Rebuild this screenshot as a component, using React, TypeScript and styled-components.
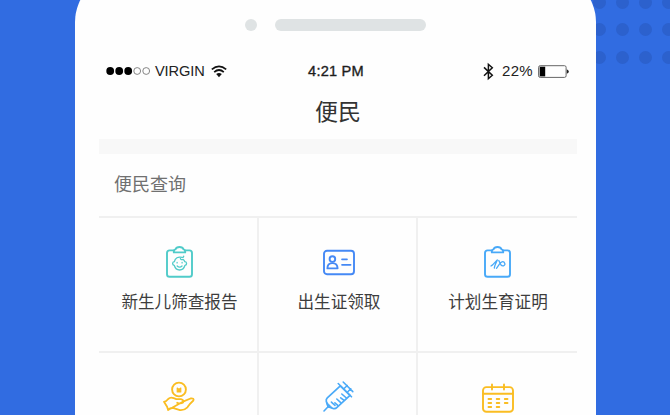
import React from "react";
import styled, { createGlobalStyle } from "styled-components";

const GlobalStyle = createGlobalStyle`
  * { box-sizing: border-box; }
  body { margin: 0; overflow: hidden; background: #316ce1; }
`;

const Page = styled.main`
  position: relative;
  width: 670px;
  height: 415px;
  overflow: hidden;
  background: #316ce1;
  font-family: "Liberation Sans", "Noto Sans CJK SC", sans-serif;
`;

const DotField = styled.div`
  position: absolute;
  top: -4px;
  left: 593px;
  display: grid;
  grid-template-columns: repeat(4, 13px);
  gap: 14.4px 10px;
`;

const BackdropDot = styled.i`
  width: 13px;
  height: 13px;
  border-radius: 50%;
  background: #2c61cd;
`;

const Phone = styled.section`
  position: relative;
  width: 520.5px;
  height: 520px;
  margin: -26px 0 0 75.3px;
  padding: 45px 18.8px 0 23.7px;
  border-radius: 48px;
  background: #fefefe;
`;

const Earpiece = styled.div`
  display: flex;
  gap: 18.5px;
  margin-left: 145.6px;
  height: 12px;
`;

const Camera = styled.i`
  width: 12px;
  height: 12px;
  border-radius: 50%;
  background: #dfe3e4;
`;

const Speaker = styled.i`
  width: 151px;
  height: 11.5px;
  border-radius: 6px;
  background: #dfe3e4;
`;

const StatusBar = styled.header`
  display: grid;
  grid-template-columns: 1fr auto 1fr;
  align-items: center;
  height: 20px;
  margin-top: 30px;
  padding: 0 8px 0 7px;
  color: #222;
  font-size: 14.6px;
  line-height: 20px;
`;

const StatusGroup = styled.div<{ $end?: boolean }>`
  display: flex;
  align-items: center;
  justify-content: ${(p) => (p.$end ? "flex-end" : "flex-start")};
  gap: ${(p) => (p.$end ? "5px" : "4px")};
`;

const Carrier = styled.span`
  width: 52px;
  letter-spacing: -0.1px;
`;

const Clock = styled.time`
  margin-right: 3px;
  color: #1d1d1d;
  letter-spacing: 0.2px;
  -webkit-text-stroke: 0.35px #1d1d1d;
`;

const Percent = styled.span`
  margin-left: 3px;
  font-size: 15px;
  letter-spacing: 0.3px;
`;

const Title = styled.h1`
  margin: 11px 0 0;
  height: 46.5px;
  color: #333;
  font: 400 23px/36px "Noto Sans CJK SC", sans-serif;
  text-align: center;
`;

const Band = styled.div`
  height: 15px;
  background: #f8f8f8;
`;

const SectionTitle = styled.h2`
  margin: 0;
  height: 62px;
  padding-left: 15px;
  color: #707070;
  font: 400 18px/59px "Noto Sans CJK SC", sans-serif;
`;

const Services = styled.div`
  display: grid;
  grid-template-columns: 160px 159px 159px;
  grid-auto-rows: 135px;
`;

const Service = styled.div`
  display: flex;
  flex-direction: column;
  align-items: center;
  padding: 28px 0 0 3px;
  border-top: 2px solid #f0f0f0;
  border-right: 2px solid #f0f0f0;
  &:nth-child(3n) {
    padding-left: 1px;
    border-right: 0;
  }
`;

const ServiceLabel = styled.span`
  margin-top: 11px;
  color: #3d3d3d;
  font: 400 16.6px/24px "Noto Sans CJK SC", sans-serif;
  white-space: nowrap;
`;

const Icon = styled.svg<{ $tone: string }>`
  display: block;
  flex: none;
  overflow: visible;
  fill: none;
  stroke: ${(p) => p.$tone};
  stroke-width: 1.9;
  stroke-linecap: round;
  stroke-linejoin: round;
`;

const Glyph = styled.svg`
  display: block;
  flex: none;
  overflow: visible;
`;

const Signal = () => (
  <Glyph width="45" height="10">
    {[0, 1, 2, 3, 4].map((n) => (
      <circle key={n} cx={4.2 + n * 9} cy="5" r={n < 3 ? 3.9 : 3.4}
        fill={n < 3 ? "#000" : "none"} stroke={n < 3 ? "none" : "#777"} strokeWidth="0.9" />
    ))}
  </Glyph>
);

const Wifi = () => (
  <Glyph width="16" height="13" fill="none" stroke="#111" strokeWidth="1.7">
    <path d="M.8 4.3Q8-1.7 15.2 4.3M3.2 7.1Q8 2.9 12.8 7.1" />
    <path d="M5.2 9.1Q8 6.9 10.8 9.1L8 12.2Z" fill="#111" stroke="none" />
  </Glyph>
);

const Bluetooth = () => (
  <Glyph width="11" height="17" fill="none" stroke="#111" strokeWidth="1.5">
    <path d="M1 4.4L9.3 12.3L5.4 15.7V1.3L9.3 4.7L1 12.7" />
  </Glyph>
);

const Battery = () => (
  <Glyph width="31" height="13">
    <rect x=".6" y=".7" width="27.5" height="11.7" rx="1.6" fill="none" stroke="#666" strokeWidth="1" />
    <rect x="1.7" y="1.7" width="5.5" height="9.7" fill="#000" />
    <path d="M28.8 4.2Q33 6.5 28.8 8.8Z" fill="#222" />
  </Glyph>
);

const Clipboard = () => (
  <>
    <path d="M8 4.4H3.6Q1 4.4 1 7V28.2Q1 30.8 3.6 30.8H23.4Q26 30.8 26 28.2V7Q26 4.4 23.4 4.4H19" />
    <path d="M7.8 6.4V5.4Q7.8 3.7 9.4 3.4Q10.3 1 13.5 1T17.6 3.4Q19.2 3.7 19.2 5.4V6.4Z" />
  </>
);

const NewbornIcon = () => (
  <Icon $tone="#50cbc9" width="27" height="32">
    <Clipboard />
    <g strokeWidth="1.3">
      <path d="M16.2 11.4C12 10.3 9 12 8.4 15.7C6 16 6.1 18.8 8.2 19.3C9.2 22.7 11 24 13.6 24S18 22.7 19 19.3C21.1 18.8 21.2 16 18.8 15.7Q18.2 14.3 17.2 13.5Q14.7 14.1 14.4 12.5M16.2 11.4Q17.6 11.6 17.7 10.2" />
      <path d="M11.1 16.5V16.9M16.1 16.5V16.9M11.2 20Q13.6 22.3 16 20" />
    </g>
  </Icon>
);

const IdCardIcon = () => (
  <Icon $tone="#4589f5" width="32" height="32">
    <rect x="1" y="4.8" width="30" height="23.4" rx="3" />
    <circle cx="9.4" cy="13.1" r="2.8" />
    <path d="M4.4 22.4Q4.4 17.1 9.4 17.1T14.6 22.4Z" />
    <path d="M19 13.3H24M19 18.8H27.6" strokeWidth="1.7" />
  </Icon>
);

const PlanningIcon = () => (
  <Icon $tone="#48a9f8" width="27" height="32">
    <Clipboard />
    <path strokeWidth="1.3" d="M7 20L8.6 18.9L13.3 14L10.8 19.8L10.3 22M12.5 22.3L15.6 17.8Q18.2 14.5 20.2 16.3Q22 18.8 19.5 19.8Q17.3 20.5 16.2 17.5L14.8 14.5" />
  </Icon>
);

const CareIcon = () => (
  <Icon $tone="#fabd22" width="32" height="32">
    <circle cx="16" cy="8.5" r="6.9" />
    <path d="M14.2 7L15.1 7.9H16.9L17.8 7V11H14.2Z" fill="#fabd22" strokeWidth="1.1" />
    <path d="M5.1 29L4.1 25.7L1 20.8Q3.3 20.5 5.2 18Q7.4 15.9 10.7 17.2L13.3 18.2H17.9Q21.4 19.1 20 21.6Q17.8 23.1 14.2 21.8M20.7 20.3L27.5 17.5Q31.5 17 30.4 19.5Q26.4 23.1 24.4 26.3Q21.2 29.5 17 29.1L10.5 27.2Q7.7 26.4 5.1 29Z" strokeWidth="1.8" />
  </Icon>
);

const SyringeIcon = () => (
  <Icon $tone="#4aaaf8" width="31" height="32">
    <path d="M17.3 4.8L4.3 16.9Q2.8 18.4 3.3 20.4L5.2 25.7L10 27.5Q12.4 28.1 14 26.4L27 14.3Z" strokeWidth="1.7" />
    <path d="M15.2 2.5L28.5 15.8M20.2 1L29.8 10.6M21.1 7.5L24.3 4.5M24.8 10.8L27.8 7.8M6 24.7L1 30M8.4 21.1L12 24.5M11.9 21.8L14.5 24.1M13.8 18L18 21.8M17.7 16.8L20.8 19.2M18.8 13L23.4 17" strokeWidth="1.6" />
    <path d="M4 21.7L9.4 26.9L5 26Z" fill="#4aaaf8" strokeWidth="1" />
  </Icon>
);

const CalendarIcon = () => (
  <Icon $tone="#fabd22" width="32" height="32">
    <rect x="1" y="6.1" width="30" height="24.7" rx="3.4" />
    <path d="M1 12.8H31M10 3.5V8.5M22 3.5V8.5" />
    <path d="M6.5 18H9.2M14.7 18H17.3M22.8 18H25.5M6.5 22H9.2M14.7 22H17.3M22.8 22H25.5M6.5 26H9.2M14.7 26H17.3" />
  </Icon>
);

const services = [
  { label: "新生儿筛查报告", Picture: NewbornIcon },
  { label: "出生证领取", Picture: IdCardIcon },
  { label: "计划生育证明", Picture: PlanningIcon },
  { Picture: CareIcon },
  { Picture: SyringeIcon },
  { Picture: CalendarIcon },
];

export default function App() {
  return (
    <>
      <GlobalStyle />
      <Page>
        <DotField>
          {Array.from({ length: 12 }, (_, n) => <BackdropDot key={n} />)}
        </DotField>
        <Phone>
          <Earpiece><Camera /><Speaker /></Earpiece>
          <StatusBar>
            <StatusGroup><Signal /><Carrier>VIRGIN</Carrier><Wifi /></StatusGroup>
            <Clock>4:21 PM</Clock>
            <StatusGroup $end><Bluetooth /><Percent>22%</Percent><Battery /></StatusGroup>
          </StatusBar>
          <Title>便民</Title>
          <Band />
          <SectionTitle>便民查询</SectionTitle>
          <Services>
            {services.map(({ label, Picture }, n) => (
              <Service key={n}>
                <Picture />
                {label && <ServiceLabel>{label}</ServiceLabel>}
              </Service>
            ))}
          </Services>
        </Phone>
      </Page>
    </>
  );
}
